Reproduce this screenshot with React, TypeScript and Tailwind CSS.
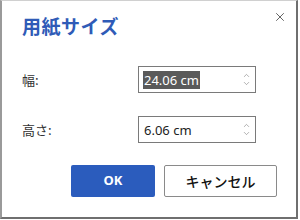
import { ChevronUp, ChevronDown, X } from 'lucide-react';

const jp = { fontFamily: '"Noto Sans CJK JP", "Noto Sans", sans-serif' };

function SpinField({ value, selected }: { value: string; selected?: boolean }) {
  return (
    <div className="flex h-[27px] w-[118px] items-center border border-[#7a7a7a] bg-white pl-[4px] pr-[4px]">
      <span
        className={
          selected
            ? 'bg-[#5a5a5a] px-[1px] text-[13px] leading-[18px] text-white'
            : 'px-[1px] text-[13px] leading-[18px] text-[#222]'
        }
        style={{ fontFamily: '"Noto Sans", "Open Sans", sans-serif' }}
      >
        {value}
      </span>
      <div className="ml-auto flex flex-col items-center text-[#777]">
        <ChevronUp size={9} strokeWidth={1.5} />
        <ChevronDown size={9} strokeWidth={1.5} className="-mt-[1px]" />
      </div>
    </div>
  );
}

export default function App() {
  return (
    <div className="h-[220px] w-[300px] bg-white" style={jp}>
      <div className="relative h-[219px] w-[298px] border-t border-l-2 border-r-2 border-b-2 border-t-[#d0d0d0] border-l-[#9a9a9a] border-r-[#6f6f6f] border-b-[#6f6f6f] bg-white">
        <button type="button" className="absolute right-[9px] top-[9px] text-[#333]">
          <X size={14} strokeWidth={1.3} />
        </button>
        <div className="px-[20px] pt-[12px]">
          <h1 className="text-[19px] font-bold leading-[26px] tracking-[0.5px] text-[#2f5bb7]">用紙サイズ</h1>
          <div className="mt-[27px] flex items-center">
            <span className="w-[116px] text-[13px] text-[#333]">幅:</span>
            <SpinField value="24.06 cm" selected />
          </div>
          <div className="mt-[23px] flex items-center">
            <span className="w-[116px] text-[13px] text-[#333]">高さ:</span>
            <SpinField value="6.06 cm" />
          </div>
          <div className="mt-[22px] flex gap-[9px] pl-[49px]">
            <button
              type="button"
              className="h-[32px] w-[84px] shrink-0 rounded-[2px] bg-[#2b5cbd] text-[13px] font-bold text-white"
              style={{ fontFamily: '"Noto Sans", sans-serif' }}
            >
              OK
            </button>
            <button
              type="button"
              className="h-[32px] w-[113px] shrink-0 rounded-[2px] border border-[#8a8a8a] bg-white text-[14px] font-medium text-[#111]"
            >
              キャンセル
            </button>
          </div>
        </div>
      </div>
    </div>
  );
}
